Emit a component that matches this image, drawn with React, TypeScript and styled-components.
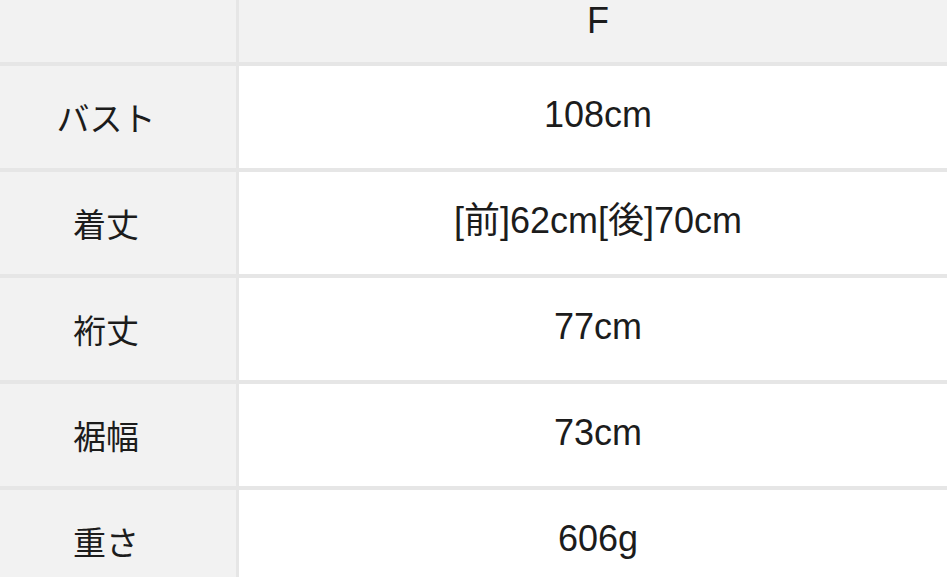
import styled, { createGlobalStyle } from 'styled-components'

type Row = {
    label: string
    value: string
}

const rows: Row[] = [
    { label: 'バスト', value: '108cm' },
    { label: '着丈', value: '[前]62cm[後]70cm' },
    { label: '裄丈', value: '77cm' },
    { label: '裾幅', value: '73cm' },
    { label: '重さ', value: '606g' },
]

const App: React.FC = () => {
    return (
        <>
            <GlobalStyle />
            <Table>
                <HeaderRow>
                    <LabelCell $head />
                    <ValueCell $head>F</ValueCell>
                </HeaderRow>
                {rows.map((row) => (
                    <BodyRow key={row.label}>
                        <LabelCell>{row.label}</LabelCell>
                        <ValueCell>{row.value}</ValueCell>
                    </BodyRow>
                ))}
            </Table>
        </>
    )
}

export default App

const GlobalStyle = createGlobalStyle`
    html, body {
        margin: 0;
        padding: 0;
        background: #ffffff;
        overflow: hidden;
    }
    body {
        font-family: "Liberation Sans", "Noto Sans CJK JP", sans-serif;
        color: #1c1c1c;
    }
`

const Table = styled.div`
    width: 969px;
    margin-left: -12px;
    display: flex;
    flex-direction: column;
`

const HeaderRow = styled.div`
    display: grid;
    grid-template-columns: 248px 718px;
    column-gap: 3px;
    background: #e6e6e6;
    height: 62px;
`

const BodyRow = styled.div`
    display: grid;
    grid-template-columns: 248px 718px;
    column-gap: 3px;
    background: #e6e6e6;
    border-top: 4px solid #e6e6e6;
    height: 102px;
`

const LabelCell = styled.div<{ $head?: boolean }>`
    display: flex;
    justify-content: center;
    align-items: ${({ $head }) => ($head ? 'flex-start' : 'center')};
    padding-right: 12px;
    background: #f2f2f2;
    font-family: "Noto Sans CJK JP", sans-serif;
    font-size: 33px;
    line-height: 1;
`

const ValueCell = styled.div<{ $head?: boolean }>`
    display: flex;
    justify-content: center;
    align-items: ${({ $head }) => ($head ? 'flex-start' : 'center')};
    padding-top: ${({ $head }) => ($head ? '3px' : '0')};
    padding-bottom: ${({ $head }) => ($head ? '0' : '4px')};
    background: ${({ $head }) => ($head ? '#f2f2f2' : '#ffffff')};
    font-size: 36px;
    line-height: 1;
`
